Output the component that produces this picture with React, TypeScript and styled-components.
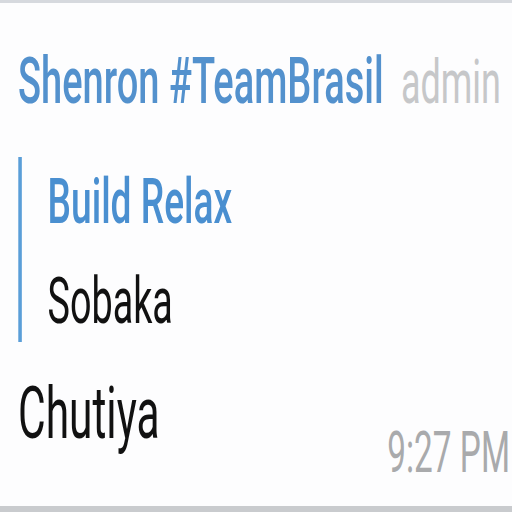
import React from "react";
import styled, { createGlobalStyle } from "styled-components";

const SX = 0.59;

const Global = createGlobalStyle`
  html, body { margin: 0; padding: 0; background: #fdfdfd; }
  body { font-family: Roboto, "Noto Sans", sans-serif; }
`;

const Frame = styled.div`
  width: 512px;
  height: 512px;
  box-sizing: border-box;
  overflow: hidden;
  background: #fdfdfe;
  border-top: 3px solid #d6d9de;
  border-bottom: 6px solid #c9cbce;
`;

const Stage = styled.div`
  width: ${512 / SX}px;
  transform: scaleX(${SX});
  transform-origin: 0 0;
  box-sizing: border-box;
  padding: 46px ${7 / SX}px 0 ${18 / SX}px;
  display: flex;
  flex-direction: column;
  white-space: nowrap;
`;

const Header = styled.div`
  display: flex;
  justify-content: space-between;
  align-items: baseline;
  line-height: 1;
  font-size: 64.5px;
`;

const Name = styled.span`
  color: #5391cd;
  font-weight: 500;
`;

const Badge = styled.span`
  color: #c6c7c9;
  font-weight: 400;
  font-size: 61px;
  margin-right: ${4 / SX}px;
`;

const Quote = styled.div`
  margin-top: 43px;
  border-left: ${4 / SX}px solid #5a9ed8;
  padding: 13px 0 8px ${26 / SX}px;
  display: flex;
  flex-direction: column;
  gap: 37px;
`;

const QuoteLine = styled.div<{ $accent?: boolean }>`
  font-size: ${(p) => (p.$accent ? 63 : 64)}px;
  line-height: 1;
  font-weight: ${(p) => (p.$accent ? 500 : 400)};
  color: ${(p) => (p.$accent ? "#4a8fd0" : "#111")};
`;

const Body = styled.div`
  margin-top: 36px;
  display: flex;
  justify-content: space-between;
  align-items: flex-start;
  line-height: 1;
`;

const Text = styled.span`
  font-size: 72px;
  color: #111;
`;

const Time = styled.span`
  font-size: 56.5px;
  color: #a9aaac;
  margin-top: 47px;
  margin-right: ${-5 / SX}px;
`;

export default function App() {
  return (
    <>
      <Global />
      <Frame>
        <Stage>
          <Header>
            <Name>Shenron #TeamBrasil</Name>
            <Badge>admin</Badge>
          </Header>
          <Quote>
            <QuoteLine $accent>Build Relax</QuoteLine>
            <QuoteLine>Sobaka</QuoteLine>
          </Quote>
          <Body>
            <Text>Chutiya</Text>
            <Time>9:27 PM</Time>
          </Body>
        </Stage>
      </Frame>
    </>
  );
}
